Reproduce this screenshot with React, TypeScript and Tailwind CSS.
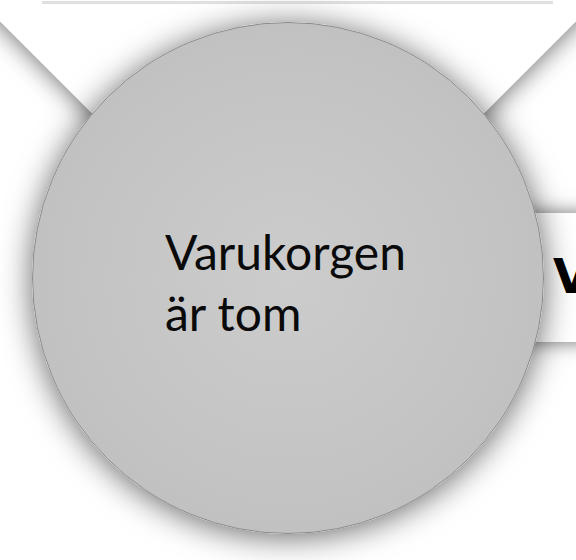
import React from "react";

export default function App() {
  return (
    <div className="relative w-[576px] h-[560px] overflow-hidden bg-white">
      {/* diamond panel behind */}
      <div className="absolute left-[38px] top-[-294px] w-[500px] h-[500px] rotate-45 bg-white shadow-[0_0_26px_rgba(0,0,0,0.62)]" />
      {/* right banner behind */}
      <div className="absolute left-[400px] top-[213px] w-[300px] h-[129px] bg-white shadow-[0_0_18px_rgba(0,0,0,0.55)] flex items-center pl-[153px] overflow-hidden">
        <span className="font-['DejaVu_Sans',sans-serif] font-bold text-[48px] leading-none text-black whitespace-nowrap mt-[-4px]">
          Va
        </span>
      </div>

      <div className="relative z-10 flex flex-col">
        <div className="mt-[1px] ml-[42px] w-[511px] h-[3px] bg-[#e4e4e4] border-y border-[#dedede]" />
        <div className="mt-[18px] ml-[32px] w-[512px] h-[512px] rounded-full border border-[#8a8a8a] bg-[radial-gradient(circle,#cccccc_0%,#c3c3c3_60%,#bbbbbb_100%)] shadow-[0_3px_32px_rgba(0,0,0,0.6)] flex flex-col justify-center pt-[8px] pl-[132px]">
          <p className="font-['Lato',sans-serif] text-[48px] leading-[61px] text-[#0a0a0a]">
            Varukorgen
            <br />
            är tom
          </p>
        </div>
      </div>
    </div>
  );
}
